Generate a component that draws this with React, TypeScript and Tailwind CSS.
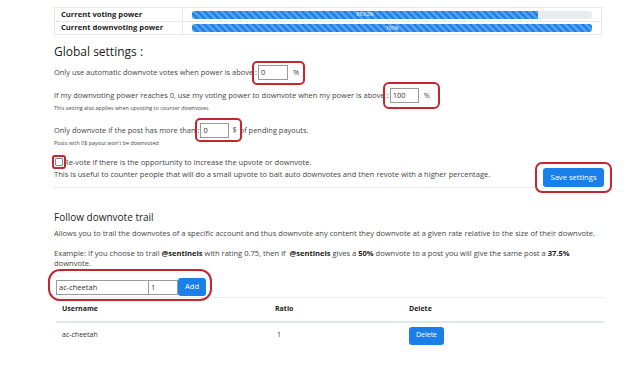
import React from "react";

const stripes =
  "bg-[linear-gradient(45deg,rgba(255,255,255,.25)_25%,transparent_25%,transparent_50%,rgba(255,255,255,.25)_50%,rgba(255,255,255,.25)_75%,transparent_75%,transparent)] bg-[length:7px_7px]";

function Mark({ className }: { className: string }) {
  return (
    <span
      className={`pointer-events-none absolute border-2 border-[#c4262e] ${className}`}
    />
  );
}

function Bar({ value, label }: { value: number; label: string }) {
  return (
    <div className="h-[8px] w-[400px] overflow-hidden rounded-[3px] bg-[#e9ecef]">
      <div
        className={`flex h-full items-center justify-center bg-[#1a7fe8] ${stripes} text-[5px] leading-none text-white`}
        style={{ width: `${value}%` }}
      >
        {label}
      </div>
    </div>
  );
}

export default function App() {
  return (
    <div className="min-h-screen bg-white font-['Open_Sans',sans-serif] text-[#444]">
      <div className="ml-[54px] w-[550px] pt-[7px]">
        {/* Power table */}
        <table className="w-[548px] border-collapse border border-[#e6e9ec] text-[7.6px]">
          <tbody>
            <tr className="h-[14px] border-b border-[#e6e9ec]">
              <td className="w-[128px] border-r border-[#e6e9ec] pl-[6px] font-bold text-[#222]">
                Current voting power
              </td>
              <td className="pl-[9px]">
                <Bar value={86.5} label="86.62%" />
              </td>
            </tr>
            <tr className="h-[13px]">
              <td className="border-r border-[#e6e9ec] pl-[6px] font-bold text-[#222]">
                Current downvoting power
              </td>
              <td className="pl-[9px]">
                <Bar value={100} label="100%" />
              </td>
            </tr>
          </tbody>
        </table>

        {/* Global settings */}
        <h2 className="mt-[9px] text-[12px] font-medium leading-[16px] text-[#222]">
          Global settings :
        </h2>
        <div className="mt-[5px] flex items-center text-[7.45px] leading-[15px]">
          <span>Only use automatic downvote votes when power is above :</span>
          <span className="relative ml-[1px] flex items-center">
            <input
              readOnly
              value="0"
              className="h-[15px] w-[30px] border border-[#9a9a9a] px-[2px] text-[7.5px] text-[#333] outline-none"
            />
            <span className="ml-[5px]">%</span>
            <Mark className="-inset-x-[6px] -top-[4px] -bottom-[5px] rounded-[5px]" />
          </span>
        </div>

        <div className="mt-[8px] flex items-center text-[7.5px] leading-[15px]">
          <span>
            If my downvoting power reaches 0, use my voting power to downvote
            when my power is above :
          </span>
          <span className="relative ml-[1px] flex items-center">
            <input
              readOnly
              value="100"
              className="h-[15px] w-[29px] border border-[#9a9a9a] px-[2px] text-[7.5px] text-[#333] outline-none"
            />
            <span className="ml-[5px]">%</span>
            <Mark className="-left-[7px] -right-[10px] -top-[6px] -bottom-[6px] rounded-[6px]" />
          </span>
        </div>
        <p className="mt-[1px] text-[5.4px] leading-[9px]">
          This setting also applies when upvoting to counter downvotes
        </p>

        <div className="mt-[10px] flex items-center text-[7.45px] leading-[15px]">
          <span>Only downvote if the post has more than :</span>
          <span className="relative ml-[1px] flex items-center">
            <input
              readOnly
              value="0"
              className="h-[15px] w-[29px] border border-[#9a9a9a] px-[2px] text-[7.5px] text-[#333] outline-none"
            />
            <span className="ml-[3px]">$</span>
            <Mark className="-left-[5px] -right-[5px] -top-[5px] -bottom-[4px] rounded-[5px]" />
          </span>
          <span className="ml-[3px]">of pending payouts.</span>
        </div>
        <p className="mt-[1px] text-[5.4px] leading-[9px]">
          Posts with 0$ payout won't be downvoted
        </p>

        <div className="mt-[8px] flex items-end">
          <div className="flex-1 border-b border-[#e6e9ec] pb-[7px] text-[7.55px] leading-[12px]">
            <div className="flex items-center">
              <span className="relative mr-[1px] ml-[1px] flex">
                <span className="h-[8px] w-[8px] rounded-[1px] border border-[#888] bg-white" />
                <Mark className="-inset-[3px] rounded-[3px]" />
              </span>
              <span>
                Re-vote if there is the opportunity to increase the upvote or
                downvote.
              </span>
            </div>
            <p>
              This is useful to counter people that will do a small upvote to
              bait auto downvotes and then revote with a higher percentage.
            </p>
          </div>
          <div className="relative mb-[1px] ml-[8px] flex">
            <button className="h-[19px] w-[61px] rounded-[3px] bg-[#1a7fe8] text-[7.6px] text-white">
              Save settings
            </button>
            <Mark className="-left-[8px] -right-[8px] -top-[6px] -bottom-[6px] rounded-[7px]" />
          </div>
        </div>

        {/* Follow downvote trail */}
        <h3 className="mt-[22px] text-[10px] font-medium leading-[14px] text-[#222]">
          Follow downvote trail
        </h3>
        <p className="mt-[4px] text-[7.55px] leading-[10px]">
          Allows you to trail the downvotes of a specific account and thus
          downvote any content they downvote at a given rate relative to the
          size of their downvote.
        </p>
        <p className="mt-[10px] w-[540px] text-[7.55px] leading-[10px]">
          Example: If you choose to trail <b className="text-[#222]">@sentinels</b>{" "}
          with rating 0.75, then if{" "}
          <b className="text-[#222]">&nbsp;@sentinels</b> gives a{" "}
          <b className="text-[#222]">50%</b> downvote to a post you will give
          the same post a <b className="text-[#222]">37.5%</b> downvote.
        </p>

        <div className="relative mt-[10px] ml-[2px] flex w-fit items-center">
          <input
            readOnly
            value="ac-cheetah"
            className="h-[15px] w-[93px] border border-[#9a9a9a] px-[2px] text-[7.5px] text-[#333] outline-none"
          />
          <input
            readOnly
            value="1"
            className="h-[15px] w-[29px] border border-[#9a9a9a] border-l-0 px-[2px] text-[7.5px] text-[#333] outline-none"
          />
          <button className="h-[18px] w-[28px] rounded-[3px] bg-[#1a7fe8] text-[7.6px] text-white">
            Add
          </button>
          <Mark className="-left-[8px] -right-[6px] -top-[9px] -bottom-[5px] rounded-[12px]" />
        </div>

        <table className="mt-[1px] ml-[2px] w-[548px] border-collapse text-[7px] text-[#333]">
          <thead>
            <tr className="h-[24px] border-t border-b-2 border-t-[#eceef0] border-b-[#e3e6e9]">
              <th className="w-[213px] pl-[6px] text-left font-bold text-[#222]">
                Username
              </th>
              <th className="w-[134px] pl-[6px] text-left font-bold text-[#222]">
                Ratio
              </th>
              <th className="pl-[6px] text-left font-bold text-[#222]">
                Delete
              </th>
            </tr>
          </thead>
          <tbody>
            <tr className="h-[27px]">
              <td className="pl-[6px]">ac-cheetah</td>
              <td className="pl-[8px]">1</td>
              <td className="pl-[6px]">
                <button className="h-[18px] w-[35px] rounded-[3px] bg-[#1a7fe8] text-[7px] text-white">
                  Delete
                </button>
              </td>
            </tr>
          </tbody>
        </table>
      </div>
    </div>
  );
}
